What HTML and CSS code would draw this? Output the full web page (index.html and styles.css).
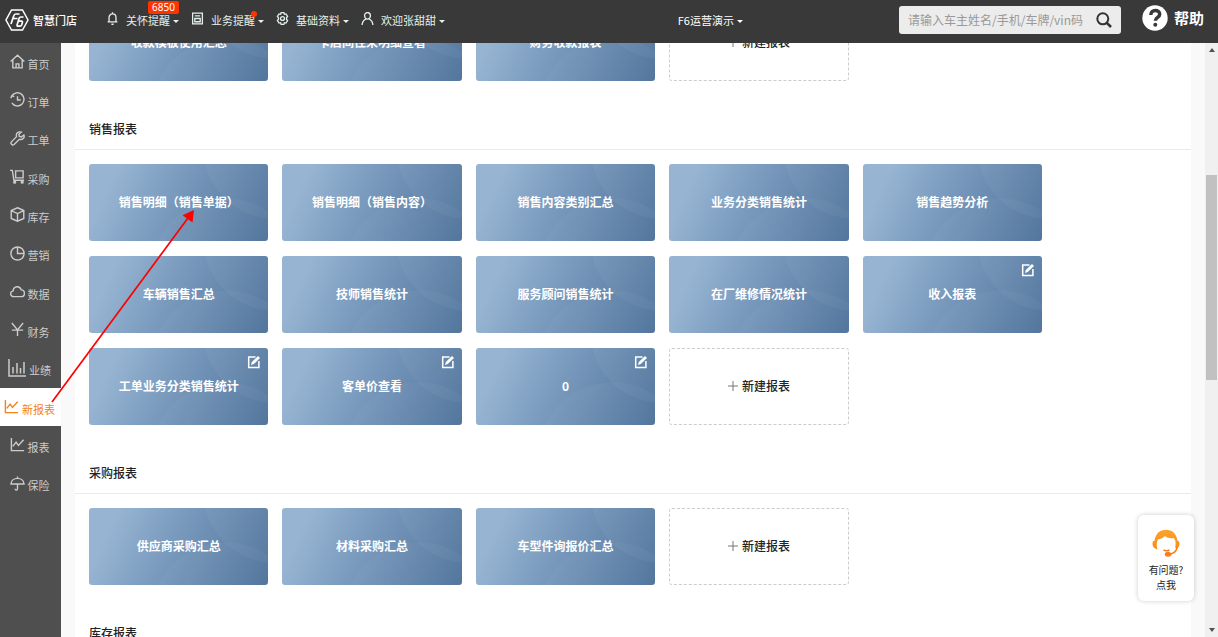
FILE: index.html
```html
<!DOCTYPE html>
<html lang="zh-CN">
<head>
<meta charset="utf-8">
<meta name="viewport" content="width=device-width, initial-scale=1">
<title>智慧门店</title>
<link rel="stylesheet" href="styles.css">
</head>
<body>
<svg class="defs" aria-hidden="true">
  <symbol id="edit" viewBox="0 0 14 14"><path d="M8.500 2H1.700v10.500h10.200V6" fill="none" stroke="currentColor" stroke-width="1.500"/><path d="M4 10l.8-2.900L11 1l2 1.900-6.200 6.200z" fill="currentColor"/></symbol>
  <symbol id="plus" viewBox="0 0 10 10"><path d="M5 0v10M0 5h10" fill="none" stroke="currentColor"/></symbol>
</svg>

<header class="topbar">
  <a class="brand" href="#">
    <svg class="brand-logo" viewBox="0 0 24 22" fill="none" stroke="currentColor"><path d="M6.500 1h11L23 11l-5.500 10h-11L1 11z" stroke-width="1.500"/><path d="M14.500 5h-3.800Q9.300 5 8.700 7L6 15M7.800 9.500h4.700M18.500 8h-2.700q-1.300 0-1.700 1.300l-2 6.700q-.3 1.200 1 1.200h1.900q1.200 0 1.600-1.200l.8-2.600q.3-1.200-.9-1.200h-2.600" stroke-width="1.700"/></svg>
    <span>智慧门店</span>
  </a>
  <nav class="topnav">
    <button class="menu" type="button">
      <svg class="menu-icon" viewBox="0 0 12 12"><path d="M2.800 9V5a3.200 3.200 0 0 1 6.400 0v4M1.500 9.200h9M5 11.300h2M6 .3v1.500"/></svg>
      <span>关怀提醒</span><i class="caret"></i><b class="count">6850</b>
    </button>
    <button class="menu" type="button">
      <svg class="menu-icon" viewBox="0 0 12 12"><path d="M1.500 1h9v10h-9zM3.500 3.500h5M3.500 6h5v3h-5z"/></svg>
      <span>业务提醒</span><i class="caret"></i><b class="dot"></b>
    </button>
    <button class="menu" type="button">
      <svg class="menu-icon" viewBox="0 0 12 12"><path d="M4.700.6h2.600l.4 1.500 1.500-.3 1.500 2.300-1 1.200v1.400l1 1.200-1.500 2.300-1.500-.3-.4 1.500H4.700l-.4-1.500-1.500.3-1.500-2.300 1-1.200V5.300l-1-1.200 1.500-2.300 1.500.3z"/><circle cx="6" cy="6" r="1.800"/></svg>
      <span>基础资料</span><i class="caret"></i>
    </button>
    <button class="menu" type="button">
      <svg class="menu-icon" viewBox="0 0 12 12"><ellipse cx="6" cy="3.500" rx="2.700" ry="3"/><path d="M1 12c.2-3 1.500-4.700 3.500-5.500M11 12c-.2-3-1.500-4.700-3.500-5.500"/></svg>
      <span>欢迎张甜甜</span><i class="caret"></i>
    </button>
  </nav>
  <button class="menu store" type="button"><span>F6运营演示</span><i class="caret"></i></button>
  <form class="search">
    <input type="text" aria-label="搜索" placeholder="请输入车主姓名/手机/车牌/vin码">
    <button type="button" aria-label="查询"><svg viewBox="0 0 16 16" fill="none" stroke="currentColor"><circle cx="6.800" cy="6.800" r="5.500" stroke-width="2"/><path d="M10.800 10.800l4.200 4.200" stroke-width="2.600"/></svg></button>
  </form>
  <a class="help" href="#">
    <svg viewBox="0 0 26 26"><circle cx="13" cy="13" r="12.700" fill="#fff"/><path d="M8.800 10c0-6 8.900-5.600 8.900-.8 0 3.300-4.300 3-4.300 6.600" fill="none" stroke="#393939" stroke-width="3.500"/><circle cx="13.300" cy="19.700" r="2" fill="#393939"/></svg>
    <span>帮助</span>
  </a>
</header>

<div class="body">
  <nav class="sidebar">
    <a class="side-item" href="#"><svg viewBox="0 0 16 16"><path d="M.7 8L8 1.200 15.300 8M3 6.500v8.300h10V6.500M6.500 14.500v-4h3v4"/></svg><span>首页</span></a>
    <a class="side-item" href="#"><svg viewBox="0 0 16 16"><path d="M2 4.200A7 7 0 1 1 2 11.500M.8 6.500L2 4l2.500 1M8 4.500v4h3.500"/></svg><span>订单</span></a>
    <a class="side-item" href="#"><svg viewBox="0 0 16 16"><path d="M14.800 4.300l-2.600 2-2.300-.6-.4-2.200 2.600-2.300C8.500 0 6 2.800 7 6L1.500 11.600c-1.400 1.700 1 4.300 2.900 2.800L10 8.900c3.500 1 5.900-1.600 4.800-4.600z"/></svg><span>工单</span></a>
    <a class="side-item" href="#"><svg viewBox="0 0 16 16"><path d="M0 1.500h2.500L4.200 12H15M6 2h8v7.500H6z"/><circle cx="5" cy="14" r="1"/><circle cx="13" cy="14" r="1"/></svg><span>采购</span></a>
    <a class="side-item" href="#"><svg viewBox="0 0 16 16"><path d="M8 .8l6.700 3v8.400L8 15.200l-6.700-3V3.800zM1.300 3.800L8 7l6.700-3.200M8 7v8"/></svg><span>库存</span></a>
    <a class="side-item" href="#"><svg viewBox="0 0 16 16"><circle cx="8" cy="8" r="7"/><path d="M8 1v7h7"/></svg><span>营销</span></a>
    <a class="side-item" href="#"><svg viewBox="0 0 16 16"><path d="M4 13.500C0 13.500-.5 8 3.300 7.300 4 1.800 10.500 1.500 12 6.300c4.500.2 4.500 7.200 0 7.200z"/></svg><span>数据</span></a>
    <a class="side-item" href="#"><svg viewBox="0 0 16 16"><path d="M2 1l6 7.500L14 1M8 8.500V15M2 8.700h12"/></svg><span>财务</span></a>
    <a class="side-item" href="#"><svg class="wide" viewBox="0 0 18 18"><path d="M1 0v17h17M5 8v6.500M9 4v10.500M12.500 9v5.500M16 3v11.500"/></svg><span>业绩</span></a>
    <a class="side-item active" href="#"><svg viewBox="0 0 16 16"><path d="M1.500 1v13.500H15M3 10l3.500-4.500L9 9l5.500-6"/></svg><span>新报表</span></a>
    <a class="side-item" href="#"><svg viewBox="0 0 16 16"><path d="M1.500 1v13.500H15M3 10l3.500-4.500L9 9l5.500-6"/></svg><span>报表</span></a>
    <a class="side-item" href="#"><svg viewBox="0 0 16 16"><path d="M1 8.500c.5-8 13.500-8 14 0zM8 .5v2M8 8.500v5c0 2-2.500 2-2.500 0"/></svg><span>保险</span></a>
  </nav>

  <main class="content">
    <div class="panel">
      <section class="group scrolled">
        <div class="grid">
          <div class="card"><a href="#">收款模板使用汇总</a></div>
          <div class="card"><a href="#">卡店间往来明细查看</a></div>
          <div class="card"><a href="#">财务收款报表</a></div>
          <button class="add" type="button"><svg><use href="#plus"/></svg>新建报表</button>
        </div>
      </section>
      <section class="group">
        <h2>销售报表</h2>
        <div class="grid">
          <div class="card"><a href="#">销售明细（销售单据）</a></div>
          <div class="card"><a href="#">销售明细（销售内容）</a></div>
          <div class="card"><a href="#">销售内容类别汇总</a></div>
          <div class="card"><a href="#">业务分类销售统计</a></div>
          <div class="card"><a href="#">销售趋势分析</a></div>
          <div class="card"><a href="#">车辆销售汇总</a></div>
          <div class="card"><a href="#">技师销售统计</a></div>
          <div class="card"><a href="#">服务顾问销售统计</a></div>
          <div class="card"><a href="#">在厂维修情况统计</a></div>
          <div class="card"><a href="#">收入报表</a><button class="edit" type="button" aria-label="编辑"><svg><use href="#edit"/></svg></button></div>
          <div class="card"><a href="#">工单业务分类销售统计</a><button class="edit" type="button" aria-label="编辑"><svg><use href="#edit"/></svg></button></div>
          <div class="card"><a href="#">客单价查看</a><button class="edit" type="button" aria-label="编辑"><svg><use href="#edit"/></svg></button></div>
          <div class="card"><a href="#">0</a><button class="edit" type="button" aria-label="编辑"><svg><use href="#edit"/></svg></button></div>
          <button class="add" type="button"><svg><use href="#plus"/></svg>新建报表</button>
        </div>
      </section>
      <section class="group">
        <h2>采购报表</h2>
        <div class="grid">
          <div class="card"><a href="#">供应商采购汇总</a></div>
          <div class="card"><a href="#">材料采购汇总</a></div>
          <div class="card"><a href="#">车型件询报价汇总</a></div>
          <button class="add" type="button"><svg><use href="#plus"/></svg>新建报表</button>
        </div>
      </section>
      <section class="group">
        <h2>库存报表</h2>
      </section>
    </div>
  </main>

  <div class="scrollbar" aria-hidden="true">
    <i class="arrow up"></i>
    <div class="track"><i class="thumb"></i></div>
    <i class="arrow down"></i>
  </div>
</div>

<svg class="pointer" viewBox="0 0 150 202" aria-hidden="true"><path d="M3 196L139 12" stroke="#f00" stroke-width="1.700"/><path d="M145 4l-1.500 12.500-10-7.300z" fill="#f00"/></svg>

<a class="service" href="#">
  <svg viewBox="0 0 28 28"><defs><linearGradient id="hair" x1="0" y1="0" x2="0" y2="1"><stop offset="0" stop-color="#fba428"/><stop offset="1" stop-color="#fb8a1c"/></linearGradient></defs>
    <path d="M5.500 20.500C3.500 20 .5 18.500.5 14.800c0-1.800.8-3 2.100-3.300C3.500 4.800 8 .8 14 .8s10.500 4 11.400 10.700c1.300.3 2.100 1.500 2.100 3.300 0 3-1.500 4.700-3.500 4.500-.8-.1-.8-1-.6-2 .6-3.500.2-6.300-1.600-8.300-3 .7-6.500-.2-8.800-2C11.500 9 8.500 10 6 10.300c-1.500 2.700-1.700 6.700-.5 10.200z" fill="url(#hair)"/>
    <path d="M25.300 18c-1 4.500-4 7.200-9.300 7.300M11.500 20.800c1.500 1.200 4.500 1.200 6 0" fill="none" stroke="#fb7d1c" stroke-width="1.500"/><ellipse cx="16" cy="25.200" rx="3.200" ry="2.500" fill="#fb7d1c"/></svg>
  <span>有问题?</span><span>点我</span>
</a>
</body>
</html>
```
FILE: styles.css
```css
* { box-sizing: border-box; }

body {
  margin: 0;
  height: 100vh;
  display: flex;
  flex-direction: column;
  overflow: hidden;
  position: relative;
  background: #f9f9f9;
  color: #222;
  font: 12px/18px "Noto Sans CJK SC", sans-serif;
}

a { color: inherit; text-decoration: none; }
button { font: inherit; color: inherit; background: none; border: 0; padding: 0; cursor: pointer; }
svg { display: block; flex: none; }
.defs { position: absolute; width: 0; height: 0; }

.topbar {
  flex: none;
  height: 43px;
  padding: 0 14px 4px 5px;
  display: flex;
  align-items: center;
  background: #393939;
  color: #fff;
  position: relative;
  z-index: 1;
}
.brand { display: flex; align-items: center; gap: 4px; font-size: 11px; font-weight: 500; }
.brand-logo { width: 24px; height: 22px; }
.topnav { display: flex; gap: 12px; margin-left: 29px; color: #e4f0ea; }
.menu { position: relative; display: flex; align-items: center; font-size: 11px; white-space: nowrap; }
.menu-icon { width: 13px; height: 13px; margin: 0 7px 2px 0; fill: none; stroke: currentColor; stroke-width: 1.2; }
.caret { margin: 4px 0 0 3px; border: 3px solid transparent; border-top-color: currentColor; border-bottom: 0; }
.count {
  position: absolute;
  left: 42px;
  top: -10px;
  padding: 0 4px;
  border-radius: 2px;
  background: #ff3300;
  color: #fff;
  font: 10px/13px "Noto Sans", sans-serif;
}
.dot { position: absolute; right: 7px; top: 0; width: 6px; height: 6px; border-radius: 50%; background: #ff3300; }
.store { margin-left: auto; margin-right: 156px; }

.search {
  width: 222px;
  height: 28px;
  display: flex;
  align-items: center;
  padding: 0 9px;
  border-radius: 3px;
  background: #ececec;
}
.search input { flex: 1; min-width: 0; padding: 0; border: 0; outline: 0; background: none; font: inherit; }
.search input::placeholder { color: #999; }
.search button { color: #333; }
.search svg { width: 16px; height: 16px; }
.help { display: flex; align-items: center; gap: 6px; margin-left: 21px; padding-bottom: 3px; font-size: 15px; font-weight: 700; }
.help svg { width: 26px; height: 26px; }

.body { flex: 1; min-height: 0; display: flex; }

.sidebar {
  flex: none;
  width: 61px;
  display: flex;
  flex-direction: column;
  background: #4f4f4f;
  color: #ccc;
}
.side-item {
  height: 38px;
  padding-right: 2px;
  display: flex;
  align-items: center;
  justify-content: center;
  gap: 3px;
  font-size: 11px;
  white-space: nowrap;
}
.side-item svg { width: 15px; height: 15px; margin-bottom: 1px; fill: none; stroke: currentColor; stroke-width: 1.5; }
.side-item .wide { width: 18px; height: 18px; }
.side-item span { padding-top: 3px; }
.side-item.active { background: #fff; color: #f58220; }
.side-item:nth-child(3n) { height: 39px; }

.content { flex: 1; min-width: 0; padding: 0 14px; overflow: hidden; }
.panel { min-height: 100%; background: #fff; }
.group { padding-bottom: 28px; }
.scrolled { margin-top: -53px; }
.group h2 {
  margin: 0;
  padding: 11px 14px;
  border-bottom: 1px solid #ebebeb;
  font-size: 12px;
  line-height: 18px;
  font-weight: 500;
}
.grid {
  display: grid;
  grid-template-columns: repeat(5, 1fr);
  gap: 15px 14px;
  max-width: 981px;
  padding: 14px 14px 0;
}
.card {
  position: relative;
  height: 77px;
  border-radius: 3px;
  color: #fff;
  font-weight: 700;
  background:
    radial-gradient(circle at 185px -16px, rgba(255, 255, 255, .04) 70px, transparent 71px),
    radial-gradient(circle at 137px 110px, rgba(255, 255, 255, .03) 75px, transparent 76px),
    linear-gradient(115deg, #97b4d2 14%, #7a9bbe 45%, #4e729a 100%);
}
.card a { display: flex; height: 100%; align-items: center; justify-content: center; padding-bottom: 2px; }
.edit { position: absolute; right: 7px; top: 7px; }
.edit svg { width: 14px; height: 14px; }
.add {
  display: flex;
  align-items: center;
  justify-content: center;
  gap: 4px;
  padding-bottom: 2px;
  border: 1px dashed #ccc;
  border-radius: 3px;
  font-weight: 500;
}
.add svg { width: 10px; height: 10px; color: #777; }

.scrollbar { flex: none; width: 13px; display: flex; flex-direction: column; align-items: center; background: #f0f0f0; }
.arrow { margin: 5px 0; border: 3px solid transparent; }
.up { border-top: 0; border-bottom: 4px solid #505050; }
.down { border-bottom: 0; border-top: 4px solid #505050; }
.track { flex: 1; width: 11px; display: grid; grid-template-rows: 118fr 205fr 243fr; }
.thumb { grid-row: 2; background: #c1c1c1; }

.pointer { position: absolute; left: 49px; top: 206px; width: 150px; height: 202px; z-index: 2; pointer-events: none; }

.service {
  position: absolute;
  right: 24px;
  bottom: 36px;
  width: 56px;
  padding: 14px 0 9px;
  display: flex;
  flex-direction: column;
  align-items: center;
  border-radius: 6px;
  background: #fff;
  box-shadow: 0 0 5px rgba(0, 0, 0, .2);
  font-size: 10px;
  line-height: 15px;
}
.service svg { width: 28px; height: 28px; margin-bottom: 5px; }
```
